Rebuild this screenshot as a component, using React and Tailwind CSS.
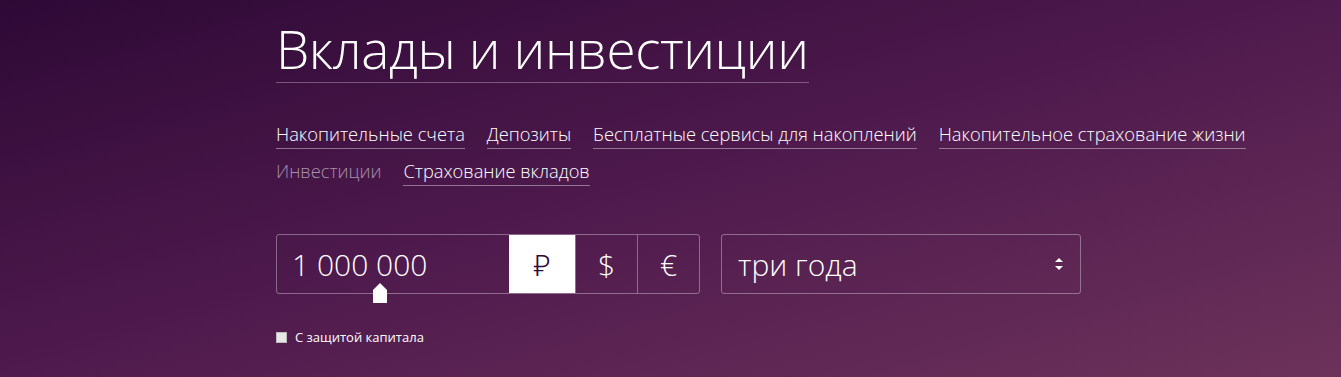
import { useState } from "react";

const links = [
  { label: "Накопительные счета" },
  { label: "Депозиты" },
  { label: "Бесплатные сервисы для накоплений" },
  { label: "Накопительное страхование жизни" },
  { label: "Инвестиции", active: true },
  { label: "Страхование вкладов" },
];

const currencies = ["₽", "$", "€"];

export default function App() {
  const [currency, setCurrency] = useState("₽");
  const [protectedCap, setProtectedCap] = useState(false);

  return (
    <div
      className="w-full h-[377px] overflow-hidden bg-gradient-to-br from-[#2e0936] via-[#4f1a4d] to-[#6c325a] text-white"
      style={{ fontFamily: '"Open Sans", "Noto Sans", sans-serif' }}
    >
      <div className="pl-[276px] pr-[60px] pt-[18px]">
        {/* ================= TITLE ================= */}
        <h1 className="inline-block text-[53px] leading-[62px] font-light tracking-[-0.4px] border-b border-white/30 pb-[2px]">
          Вклады и инвестиции
        </h1>

        {/* ================= LINKS ================= */}
        <ul className="mt-[39px] flex flex-wrap gap-x-[22px] gap-y-[14px] text-[18.3px] font-light leading-[23px]">
          {links.map((item) => (
            <li key={item.label}>
              <span
                className={
                  item.active
                    ? "text-[#a98fac]"
                    : "border-b border-white/40 pb-[2px] text-white cursor-pointer"
                }
              >
                {item.label}
              </span>
            </li>
          ))}
        </ul>

        {/* ================= CALCULATOR ================= */}
        <div className="mt-[52px] flex gap-[21px]">
          <div className="relative flex w-[424px] h-[60px] border border-white/35 rounded-[3px]">
            <div className="flex-1 flex items-center pl-[15px] text-[30px] font-light">
              1 000 000
            </div>
            {currencies.map((c, i) => (
              <button
                key={c}
                onClick={() => setCurrency(c)}
                className={`w-[62px] flex items-center justify-center text-[30px] font-light ${
                  currency === c ? "bg-white text-[#2f0a37] w-[66px]" : "text-white"
                } ${i > 0 ? "border-l border-white/35" : ""}`}
              >
                {c}
              </button>
            ))}
            <div className="absolute left-[96px] top-[48px] w-[14px] h-[20px] bg-white [clip-path:polygon(50%_0,100%_35%,100%_100%,0_100%,0_35%)]" />
          </div>

          <div className="flex items-center justify-between w-[360px] h-[60px] border border-white/35 rounded-[3px] pl-[16px] pr-[16px]">
            <span className="text-[30px] font-light">три года</span>
            <svg width="10" height="16" viewBox="0 0 10 16">
              <path d="M1 6 L5 2 L9 6 Z" fill="white" />
              <path d="M1 10 L5 14 L9 10 Z" fill="white" />
            </svg>
          </div>
        </div>

        <label className="mt-[34px] flex items-center gap-[8px] text-[13px] cursor-pointer w-fit">
          <span
            onClick={() => setProtectedCap(!protectedCap)}
            className={`w-[11px] h-[11px] border border-[#bbb] ${protectedCap ? "bg-white" : "bg-[#e6e6e6]"}`}
          />
          С защитой капитала
        </label>
      </div>
    </div>
  );
}
